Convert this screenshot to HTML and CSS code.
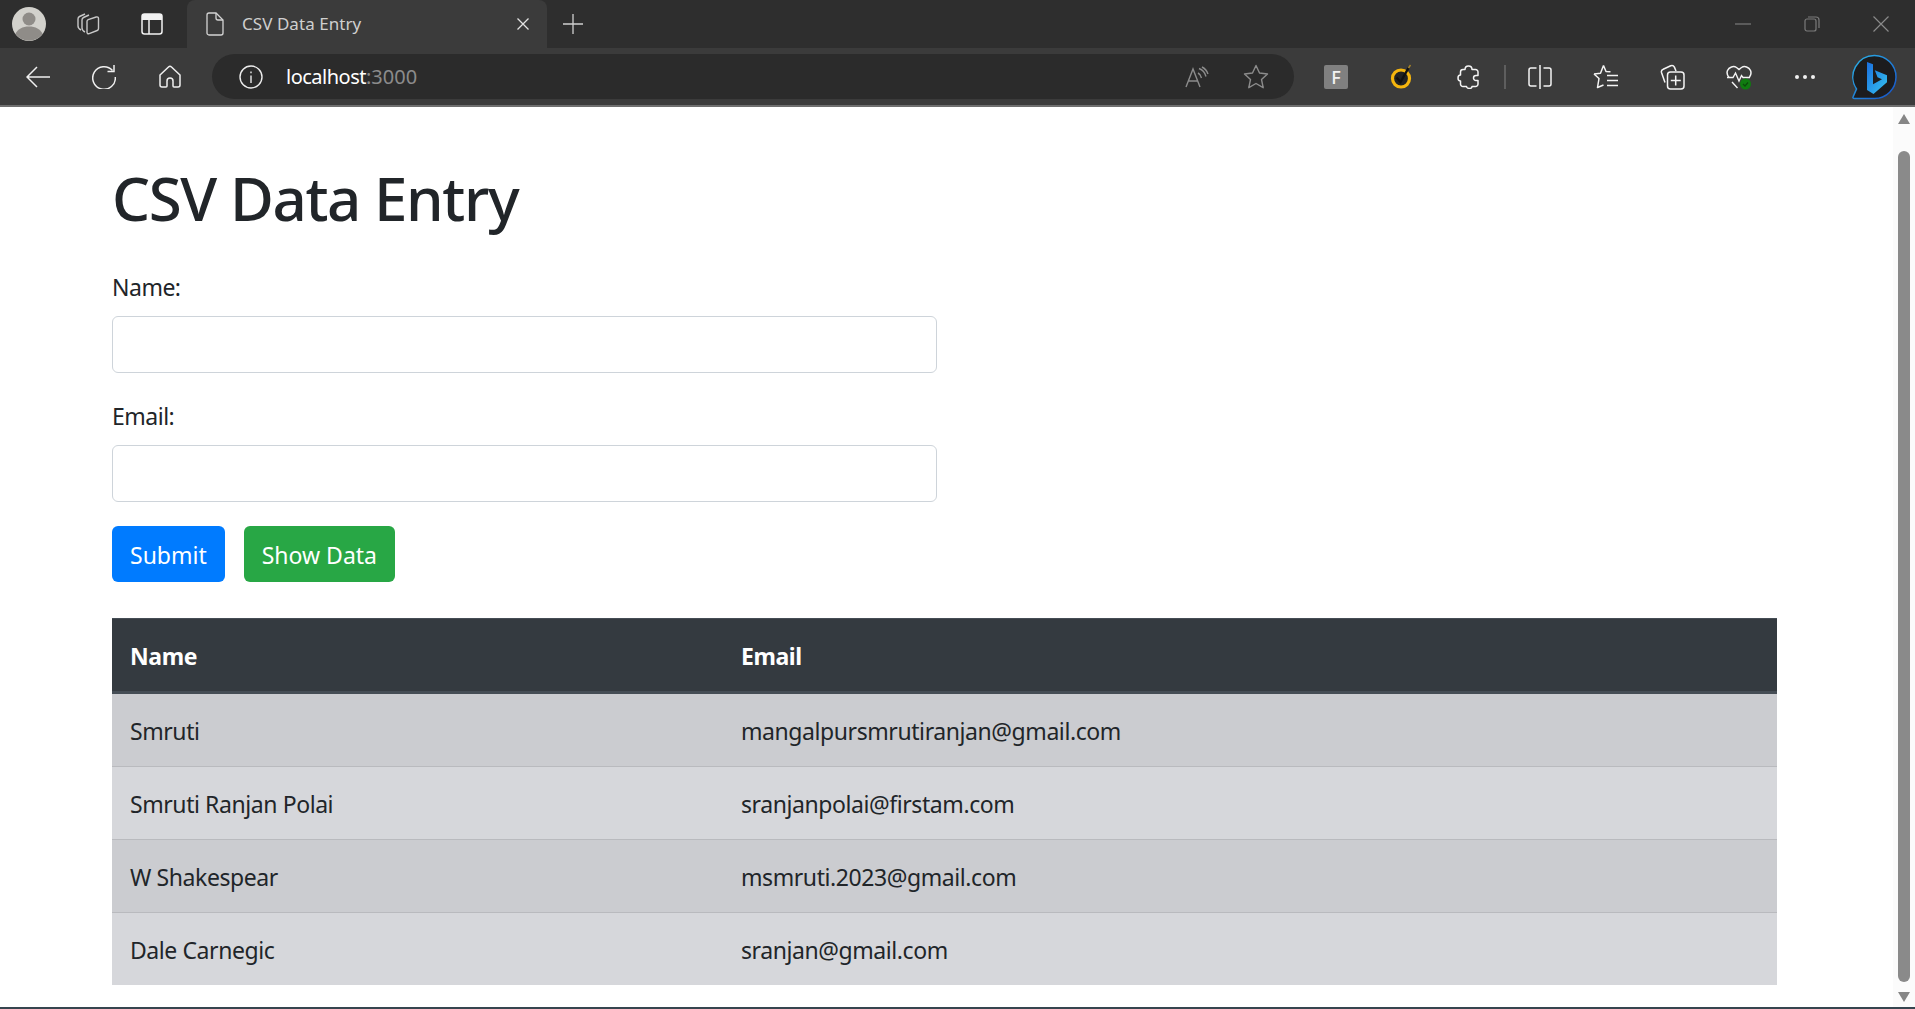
FILE: index.html
```html
<!DOCTYPE html>
<html lang="en">
<head>
    <title>CSV Data Entry</title>
    <meta charset="utf-8">
    <link rel="stylesheet" href="styles.css">
</head>
<body>
    <!-- Browser tab strip -->
    <div class="tabstrip">
        <div class="strip_btn strip_avatar">
            <svg width="34" height="34" viewBox="0 0 34 34"><circle cx="17" cy="17" r="17" fill="#d2d1cc"/><circle cx="17" cy="12" r="6.500" fill="#8f8c88"/><path d="M3.500 27c2-5 7-7.500 13.500-7.500S28.500 22 30.500 27A17 17 0 0 1 3.500 27z" fill="#8f8c88"/></svg>
        </div>
        <div class="strip_btn strip_tabs">
            <svg width="26" height="26" viewBox="0 0 26 26" fill="none" stroke="#c8c8c8" stroke-width="1.400"><path d="M5 19c-2-1-3-2-3-4V8c0-1 .5-2 1.500-2.500L9 3"/><path d="M9 21c-2-1-3-2-3-4V9c0-1 .5-2 1.500-2.500L13 4"/><path d="M11 10.500c0-1 .5-1.500 1.200-1.800l8-2.700c1.200-.4 2.300.2 2.300 1.500v10c0 1-.5 1.700-1.300 2l-8 3.200c-1.200.4-2.200-.3-2.200-1.500z"/></svg>
        </div>
        <div class="strip_btn strip_vertical">
            <svg width="22" height="22" viewBox="0 0 22 22"><path d="M3.500 1h15A2.500 2.500 0 0 1 21 3.500V7H1V3.500A2.500 2.500 0 0 1 3.500 1z" fill="#f2f2f2"/><rect x="1" y="1" width="20" height="20" rx="2.500" fill="none" stroke="#f2f2f2" stroke-width="1.500"/><path d="M8 7v14" stroke="#f2f2f2" stroke-width="1.500"/></svg>
        </div>
        <div class="tab">
            <svg class="tab_icon" width="18" height="24" viewBox="0 0 18 24" fill="none" stroke="#d4d4d4" stroke-width="1.300"><path d="M1 3a2 2 0 0 1 2-2h7l7 7v13a2 2 0 0 1-2 2H3a2 2 0 0 1-2-2z"/><path d="M10 1v5a2 2 0 0 0 2 2h5"/></svg>
            <span class="tab_title">CSV Data Entry</span>
            <svg class="tab_close" width="12" height="12" viewBox="0 0 12 12" stroke="#e2e2e2" stroke-width="1.300"><path d="M.5.500l11 11M11.500.500l-11 11"/></svg>
        </div>
        <div class="new_tab">
            <svg width="20" height="20" viewBox="0 0 20 20" stroke="#cfcfcf" stroke-width="1.300"><path d="M10 0v20M0 10h20"/></svg>
        </div>
        <div class="window_controls">
            <div class="win_btn"><svg width="16" height="2" viewBox="0 0 16 2"><path d="M0 1h16" stroke="#7b7b7b" stroke-width="1.200"/></svg></div>
            <div class="win_btn"><svg width="16" height="16" viewBox="0 0 16 16" fill="none" stroke="#7b7b7b" stroke-width="1.200"><rect x="1" y="3" width="11" height="12" rx="2"/><path d="M4 1h8a3 3 0 0 1 3 3v8"/></svg></div>
            <div class="win_btn"><svg width="16" height="16" viewBox="0 0 16 16" stroke="#8a8a8a" stroke-width="1.200"><path d="M.5.500l15 15M15.500.500l-15 15"/></svg></div>
        </div>
    </div>

    <!-- Browser toolbar -->
    <div class="toolbar">
        <div class="tool_btn">
            <svg width="24" height="22" viewBox="0 0 24 22" fill="none" stroke="#f0f0f0" stroke-width="1.500"><path d="M24 11H1M11 1L1 11l10 10"/></svg>
        </div>
        <div class="tool_btn">
            <svg width="24" height="24" viewBox="0 0 24 24" fill="none" stroke="#f0f0f0" stroke-width="1.500"><path d="M20.500 5.500A11.300 11.300 0 1 0 23.300 12"/><path d="M22 0v6.500h-6.500"/></svg>
        </div>
        <div class="tool_btn">
            <svg width="22" height="23" viewBox="0 0 22 23" fill="none" stroke="#f0f0f0" stroke-width="1.500"><path d="M1 10l8.500-8a2.200 2.200 0 0 1 3 0L21 10v10a2 2 0 0 1-2 2h-4a1 1 0 0 1-1-1v-5a3 3 0 0 0-6 0v5a1 1 0 0 1-1 1H3a2 2 0 0 1-2-2z"/></svg>
        </div>

        <div class="address_bar">
            <svg class="info_icon" width="24" height="24" viewBox="0 0 24 24" fill="none" stroke="#ececec" stroke-width="1.400"><circle cx="12" cy="12" r="11"/><path d="M12 10.500V18M12 6.500v1.800"/></svg>
            <span class="url_host">localhost</span><span class="url_port">:3000</span>
            <div class="address_actions">
                <svg class="read_icon" width="24" height="22" viewBox="0 0 24 22" fill="none" stroke="#8c8c8c" stroke-width="1.400"><path d="M1 21L8 3l7 18M3.500 15h9"/><path d="M13 7c2 1 3 2.500 3.500 5M14 2.500c4 1.500 6 4 7 8M17 1c3 1.500 5 4 6 7"/></svg>
                <svg class="star_icon" width="26" height="25" viewBox="0 0 26 25" fill="none" stroke="#8c8c8c" stroke-width="1.400" stroke-linejoin="round"><path d="M13 1.500l3.500 7.500 8 1-6 5.500 1.700 8.200L13 19.500l-7.200 4.200 1.700-8.200-6-5.500 8-1z"/></svg>
            </div>
        </div>

        <div class="tool_btn">
            <div class="f_ext">F</div>
        </div>
        <div class="tool_btn">
            <svg width="26" height="28" viewBox="0 0 26 28"><circle cx="12" cy="15.500" r="8.500" fill="#222" stroke="#f5b50e" stroke-width="3.200"/><path d="M7.500 14.500l4 4.500 8-14" fill="none" stroke="#111" stroke-width="2.400"/><path d="M19.500 5l2-3" stroke="#a8842a" stroke-width="1.400"/></svg>
        </div>
        <div class="tool_btn">
            <svg width="22" height="24" viewBox="0 0 22 24" fill="none" stroke="#f4f4f4" stroke-width="1.500" stroke-linejoin="round"><path d="M8 4.500C8 2.500 9.500 1 11.500 1S15 2.500 15 4.500h3.500A2.500 2.500 0 0 1 21 7v3.500h-2a2.500 2.500 0 0 0 0 5h2V19a2.500 2.500 0 0 1-2.500 2.500H15c0 1-1 2-2.500 2s-3-1-3-2H6A2.500 2.500 0 0 1 3.500 19v-3C2 16 1 14.500 1 13s1-3 2.500-3V7A2.500 2.500 0 0 1 6 4.500z"/></svg>
        </div>
        <div class="tool_sep"></div>
        <div class="tool_btn">
            <svg width="24" height="26" viewBox="0 0 24 26" fill="none" stroke="#f4f4f4" stroke-width="1.500"><path d="M12 1v24"/><path d="M8.500 4H3a2 2 0 0 0-2 2v14a2 2 0 0 0 2 2h5.500M15.500 4H21a2 2 0 0 1 2 2v14a2 2 0 0 1-2 2h-5.500"/></svg>
        </div>
        <div class="tool_btn">
            <svg width="26" height="26" viewBox="0 0 26 26" fill="none" stroke="#f4f4f4" stroke-width="1.500" stroke-linejoin="round"><path d="M10.500 1.500l2.500 6 4.500.300M1 10l6.500-.700L10.500 1.500M1 10l5 4.500L4.500 23.500 10.500 21"/><path d="M14 11.500h11M14 16.500h11M14 21.500h11"/></svg>
        </div>
        <div class="tool_btn">
            <svg width="26" height="26" viewBox="0 0 26 26" fill="none" stroke="#f4f4f4" stroke-width="1.500"><path d="M6 18.500L2.500 8.500c-.4-1.500.3-2.800 1.700-3.300l7.500-3.500c1.500-.6 3 0 3.700 1.400L17 7"/><rect x="8.500" y="8" width="16.500" height="17" rx="3"/><path d="M16.700 11.500v10M11.800 16.500h10"/></svg>
        </div>
        <div class="tool_btn">
            <svg class="heart_icon" width="26" height="26" viewBox="0 0 26 26"><path d="M3 13.500C1 11 .5 9 1.500 6.500 3 3 7.500 1.500 10.500 3.500l2.500 2 2.500-2c3-2 7.500-.5 9 3 1 2.500.5 4.500-1 6.500" fill="none" stroke="#f4f4f4" stroke-width="1.500"/><path d="M1 13.500h6l2.500-4.500 3.500 8 2.500-5.500 1.500 2h7M6 18l5.500 6" fill="none" stroke="#f4f4f4" stroke-width="1.400"/><circle cx="19.500" cy="20" r="5.500" fill="#107c10"/><path d="M17 20l2 2 3-3.500" fill="none" stroke="#0b4a0b" stroke-width="1.200"/></svg>
        </div>
        <div class="tool_btn tool_dots">
            <span></span><span></span><span></span>
        </div>
        <div class="bing_btn">
            <svg width="46" height="46" viewBox="0 0 46 46">
                <defs>
                    <linearGradient id="bingRing" x1="0" y1="0" x2="1" y2="1"><stop offset="0" stop-color="#2cb5e8"/><stop offset="1" stop-color="#1650c8"/></linearGradient>
                    <linearGradient id="bingB" x1="0" y1="0" x2="1" y2="1"><stop offset="0" stop-color="#1a6fe0"/><stop offset="1" stop-color="#36c3ef"/></linearGradient>
                </defs>
                <path d="M23.500 1.500A21.500 21.500 0 1 1 23.500 44.500H3.500c-1.500 0-2-1-1.200-2.200L5.500 35A21.500 21.500 0 0 1 23.500 1.500z" fill="#1c1c1e" stroke="url(#bingRing)" stroke-width="1.500"/>
                <path d="M16 8l6 2.200v20l9-5-4.500-2-2.700-7 12.200 5v7L22.500 40 16 36z" fill="url(#bingB)"/>
            </svg>
        </div>
    </div>

    <!-- Page content -->
    <div class="viewport">
        <div class="page">
            <h1 class="page_title">CSV Data Entry</h1>
            <form class="entry_form">
                <div class="form_group">
                    <label class="form_label" for="name">Name:</label>
                    <input class="form_input" id="name" type="text">
                </div>
                <div class="form_group">
                    <label class="form_label" for="email">Email:</label>
                    <input class="form_input" id="email" type="email">
                </div>
                <div class="form_buttons">
                    <button class="btn btn_primary" type="button">Submit</button>
                    <button class="btn btn_success" type="button">Show Data</button>
                </div>
            </form>
            <table class="data_table">
                <thead>
                    <tr><th class="col_name">Name</th><th>Email</th></tr>
                </thead>
                <tbody>
                    <tr><td>Smruti</td><td>mangalpursmrutiranjan@gmail.com</td></tr>
                    <tr><td>Smruti Ranjan Polai</td><td>sranjanpolai@firstam.com</td></tr>
                    <tr><td>W Shakespear</td><td>msmruti.2023@gmail.com</td></tr>
                    <tr><td>Dale Carnegic</td><td>sranjan@gmail.com</td></tr>
                </tbody>
            </table>
        </div>
        <div class="scrollbar">
            <div class="scroll_up"></div>
            <div class="scroll_thumb"></div>
            <div class="scroll_down"></div>
        </div>
    </div>
</body>
</html>
```

FILE: styles.css
```css
/* Base */
html, body {
    margin: 0;
    padding: 0;
    height: 100%;
    overflow: hidden;
    background: #fff;
    font-family: 'Noto Sans', 'Open Sans', sans-serif;
}

body {
    display: flex;
    flex-direction: column;
}

/* Tab strip */
.tabstrip {
    display: flex;
    align-items: flex-end;
    height: 48px;
    background: #2e2e2e;
    flex-shrink: 0;
}

.strip_btn {
    display: flex;
    align-items: center;
    justify-content: center;
    height: 48px;
}

.strip_avatar { width: 58px; }
.strip_tabs { width: 62px; }
.strip_vertical { width: 64px; }

.tab {
    display: flex;
    align-items: center;
    width: 360px;
    height: 48px;
    margin-left: 3px;
    padding: 0 18px 0 19px;
    box-sizing: border-box;
    background: #3b3b3b;
    border-radius: 8px 8px 0 0;
}

.tab_title {
    flex: 1;
    margin-left: 18px;
    padding-bottom: 2px;
    font-size: 17px;
    letter-spacing: 0.05px;
    color: #cfcfcf;
}

.new_tab {
    display: flex;
    align-items: center;
    justify-content: center;
    width: 52px;
    height: 48px;
}

.window_controls {
    display: flex;
    margin-left: auto;
    height: 48px;
}

.win_btn {
    display: flex;
    align-items: center;
    justify-content: center;
    width: 69px;
}

/* Toolbar */
.toolbar {
    display: flex;
    align-items: center;
    height: 57px;
    padding-left: 5px;
    background: #3b3b3b;
    border-bottom: 2px solid #6e6e6e;
    flex-shrink: 0;
}

.tool_btn {
    display: flex;
    align-items: center;
    justify-content: center;
    width: 66px;
    height: 57px;
    flex-shrink: 0;
}

.address_bar {
    display: flex;
    align-items: center;
    width: 1082px;
    height: 45px;
    margin-left: 9px;
    margin-right: 9px;
    padding: 0 25px 0 27px;
    box-sizing: border-box;
    background: #2b2b2b;
    border-radius: 23px;
    font-size: 20px;
    letter-spacing: -0.5px;
}

.info_icon { margin-right: 23px; }
.url_host { color: #fff; }
.url_port { color: #8b8b8b; letter-spacing: 0; }

.address_actions {
    display: flex;
    align-items: center;
    gap: 34px;
    margin-left: auto;
}

.f_ext {
    width: 24px;
    height: 24px;
    border-radius: 2px;
    background: #808080;
    color: #f2f2f2;
    font-size: 18px;
    font-weight: 500;
    line-height: 24px;
    text-align: center;
}

.tool_sep {
    width: 2px;
    height: 24px;
    margin: 0 1px 0 3px;
    background: #5e5e5e;
}

.heart_icon { margin-left: 1px; }

.tool_dots { gap: 4px; margin-left: 1px; margin-right: -1px; }

.tool_dots span {
    width: 4px;
    height: 4px;
    border-radius: 50%;
    background: #f0f0f0;
}

.bing_btn {
    display: flex;
    justify-content: center;
    width: 74px;
}

/* Viewport */
.viewport {
    display: flex;
    flex: 1;
    min-height: 0;
    border-bottom: 2px solid #36454f;
}

.page {
    flex: 1;
    padding: 55px 0 0 112px;
    color: #212529;
    font-size: 23px;
    line-height: 36px;
}

.page_title {
    margin: 0 0 34px;
    font-size: 60px;
    font-weight: 550;
    line-height: 72px;
    letter-spacing: -1.4px;
}

.entry_form { width: 825px; }

.form_group { margin-bottom: 24px; }

.form_label {
    display: block;
    padding-top: 1px;
    margin-bottom: 11px;
    letter-spacing: -0.5px;
}

.form_input {
    display: block;
    width: 100%;
    height: 57px;
    box-sizing: border-box;
    border: 1.5px solid #ced4da;
    border-radius: 6px;
    background: #fff;
}

.form_buttons {
    display: flex;
    gap: 19px;
}

.btn {
    height: 56px;
    padding: 2px 18px 0;
    border: none;
    border-radius: 6px;
    color: #fff;
    font-family: inherit;
    font-size: 23px;
    letter-spacing: 0;
}

.btn_primary { background: #007bff; }
.btn_success { background: #28a745; }

/* Table */
.data_table {
    width: 1665px;
    margin-top: 36px;
    border-collapse: collapse;
}

.data_table th, .data_table td {
    padding: 19px 18px 17px;
    text-align: left;
    letter-spacing: -0.420px;
}

.data_table th {
    background: #343a40;
    color: #fff;
    font-weight: 700;
    border-top: 1px solid #454d55;
    border-bottom: 3px solid #454d55;
}

.col_name { width: 575px; }

.data_table td { border-top: 1px solid #b9babe; }
.data_table tbody tr:nth-child(odd) { background: #cbccd0; }
.data_table tbody tr:nth-child(even) { background: #d6d7db; }

/* Scrollbar */
.scrollbar {
    position: relative;
    width: 22px;
    background: #fbfbfb;
    flex-shrink: 0;
}

.scroll_up, .scroll_down {
    position: absolute;
    left: 5px;
    width: 0;
    height: 0;
    border-left: 6px solid transparent;
    border-right: 6px solid transparent;
}

.scroll_up {
    top: 7px;
    border-bottom: 10px solid #868686;
}

.scroll_down {
    bottom: 5px;
    border-top: 10px solid #868686;
}

.scroll_thumb {
    position: absolute;
    top: 44px;
    bottom: 25px;
    left: 5px;
    width: 12px;
    border-radius: 6px;
    background: #8a8a8a;
}
```
